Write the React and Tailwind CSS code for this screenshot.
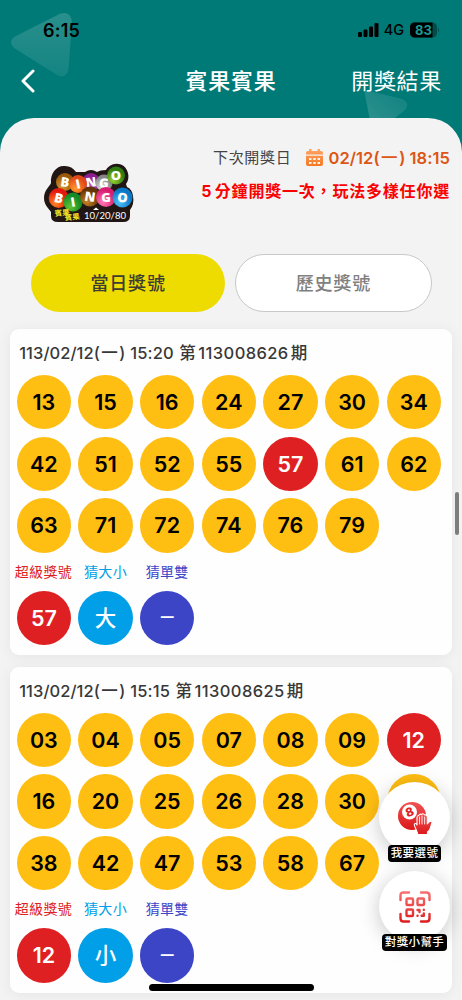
import { useState } from "react";

const draws = [
    {
        date: "113/02/12",
        time: "15:20",
        period: "113008626",
        numbers: ["13", "15", "16", "24", "27", "30", "34", "42", "51", "52", "55", "57", "61", "62", "63", "71", "72", "74", "76", "79"],
        superNumber: "57",
        size: "大",
        parity: "－",
    },
    {
        date: "113/02/12",
        time: "15:15",
        period: "113008625",
        numbers: ["03", "04", "05", "07", "08", "09", "12", "16", "20", "25", "26", "28", "30", "34", "38", "42", "47", "53", "58", "67"],
        superNumber: "12",
        size: "小",
        parity: "－",
    },
];

const logoBalls = [
    { x: 35, y: 32, r: 9, color: "#9a5a0a", light: "#d79a2c", letter: "B", tilt: 8 },
    { x: 61, y: 32, r: 9, color: "#8b1d8e", light: "#c45cc4", letter: "N", tilt: -8 },
    { x: 74, y: 33, r: 8.5, color: "#858585", light: "#dddddd", letter: "G", tilt: 8 },
    { x: 48, y: 34, r: 9, color: "#e2491a", light: "#ff9a2c", letter: "I", tilt: -12 },
    { x: 86, y: 25.5, r: 9, color: "#2f7d10", light: "#9ad232", letter: "O", tilt: 0 },
    { x: 28.7, y: 48, r: 10, color: "#e3170f", light: "#ff8a20", letter: "B", tilt: 12 },
    { x: 43, y: 52, r: 9.5, color: "#138a26", light: "#62c430", letter: "I", tilt: -10 },
    { x: 60, y: 46.5, r: 10, color: "#633307", light: "#c98522", letter: "N", tilt: 8 },
    { x: 76, y: 47, r: 10, color: "#d91c70", light: "#ff7ab8", letter: "G", tilt: 0 },
    { x: 92.5, y: 47.5, r: 10, color: "#0878c8", light: "#52c0f8", letter: "O", tilt: 8 },
];

function StatusBar() {
    return (
        <div className="flex h-[60px] items-center justify-between pl-[43px] pr-[22px] text-black">
            <span className="text-[18px] font-semibold tracking-[0.2px]">6:15</span>
            <div className="flex items-center">
                <svg className="h-[14px] w-[21px]" viewBox="0 0 21 14">
                    <rect x="0" y="9" width="4" height="5" rx="1.2" />
                    <rect x="5.5" y="6.5" width="4" height="7.5" rx="1.2" />
                    <rect x="11" y="3.5" width="4" height="10.5" rx="1.2" />
                    <rect x="16.5" y="0" width="4" height="14" rx="1.2" />
                </svg>
                <span className="ml-[5px] text-[14.5px] font-medium">4G</span>
                <svg className="ml-[6px] h-[16px] w-[30px]" viewBox="0 0 30 16">
                    <rect x="0" y="0.5" width="27" height="15" rx="4.5" fill="#004e4b" />
                    <path d="M4.5.5H22.5v15h-18A4.5 4.5 0 0 1 0 11V5A4.5 4.5 0 0 1 4.5.5Z" />
                    <path d="M28 5.5q2 2.5 0 5Z" fill="#004e4b" />
                    <text x="13.5" y="12.6" textAnchor="middle" fill="#1a9a94" fontSize="13" fontWeight="700">83</text>
                </svg>
            </div>
        </div>
    );
}

function Header() {
    return (
        <header className="relative h-[118px] shrink-0">
            <svg className="absolute left-0 top-0 h-[140px] w-full" viewBox="0 0 462 140">
                <defs>
                    <linearGradient id="triLeft" x1="0" y1="0" x2="0" y2="1">
                        <stop offset="0" stopColor="#fff" stopOpacity="0.16" />
                        <stop offset="1" stopColor="#fff" stopOpacity="0.08" />
                    </linearGradient>
                    <linearGradient id="triRight" x1="1" y1="0" x2="0" y2="1">
                        <stop offset="0" stopColor="#fff" stopOpacity="0.06" />
                        <stop offset="1" stopColor="#fff" stopOpacity="0.19" />
                    </linearGradient>
                </defs>
                <path d="M14 37 60 13.8Q70 10.500 72 21L68.500 69Q67 78.500 58 75.500L14 48Q8 42 14 37Z" fill="url(#triLeft)" />
                <path d="M369 91 402.500 99Q411 104 405 110L380 130H372L365 95Q364 90 369 91Z" fill="url(#triRight)" />
            </svg>
            <div className="relative">
                <StatusBar />
                <div className="grid h-[42px] grid-cols-[1fr_auto_1fr] items-center px-[20px] text-white">
                    <svg className="ml-[1px] h-[24px] w-[14px]" viewBox="0 0 14 24" fill="none" stroke="currentColor" strokeWidth="3" strokeLinecap="round" strokeLinejoin="round">
                        <path d="M12 2 2 12l10 10" />
                    </svg>
                    <h1 className="text-[22px] font-medium tracking-[0.7px]">賓果賓果</h1>
                    <span className="text-right text-[22px] font-normal tracking-[0.7px]">開獎結果</span>
                </div>
            </div>
        </header>
    );
}

function BingoLogo() {
    return (
        <svg className="h-[90px] w-[120px]" viewBox="0 0 120 90" fontFamily='"Open Sans", "Noto Sans CJK TC", sans-serif'>
            <defs>
                {logoBalls.map((ball, i) => (
                    <radialGradient key={i} id={`logoBall${i}`} cx="0.35" cy="0.75" r="0.6">
                        <stop offset="0" stopColor={ball.light} />
                        <stop offset="1" stopColor={ball.color} />
                    </radialGradient>
                ))}
            </defs>
            <path
                d="M35 16C27 15 20 23 21 33C20 36 14 40 14 48C14 55 19 59 21 62V66Q21 72 28 72H93Q100 72 100 66V60Q104.500 54 103 46Q102 39 97 37L96 34C101 28 98 17 91 14.500C84 12 78 16 76 20Q70 20 67 22Q61 18 55 22H46Q42 16 35 16Z"
                fill="#211613"
            />
            {logoBalls.map((ball, i) => (
                <g key={i}>
                    <circle cx={ball.x} cy={ball.y} r={ball.r} fill={`url(#logoBall${i})`} />
                    <text
                        x={ball.x} y={ball.y + 4.700} textAnchor="middle" fill="#fff" fontSize="13" fontWeight="800"
                        transform={`rotate(${ball.tilt} ${ball.x} ${ball.y})`}>
                        {ball.letter}
                    </text>
                </g>
            ))}
            <text x="25" y="66.500" fill="#f2e526" fontSize="7.5" fontWeight="700" transform="rotate(-7 24 66)">賓果</text>
            <text x="35" y="70.500" fill="#f2e526" fontSize="7.5" fontWeight="700" transform="rotate(-6 35 70)">賓果</text>
            <path d="M63 60 66 57.500 69 60Z" fill="#fff" />
            <text x="54" y="69" fill="#fff" fontFamily="Lato, sans-serif" fontSize="9.5" textLength="42" lengthAdjust="spacingAndGlyphs">10/20/80</text>
        </svg>
    );
}

function NextDraw() {
    return (
        <section className="flex h-[110px] shrink-0 justify-between pl-[30px] pr-[12px]">
            <div className="pt-[32px]">
                <BingoLogo />
            </div>
            <div className="flex flex-col items-end pt-[28px]">
                <div className="flex h-[24px] items-center">
                    <span className="text-[15px] tracking-[0.7px] text-[#444]">下次開獎日</span>
                    <svg className="ml-[14px] h-[18px] w-[19px]" viewBox="0 0 19 18">
                        <defs>
                            <linearGradient id="calendar" x1="0" y1="0" x2="0" y2="1">
                                <stop offset="0" stopColor="#ffa565" />
                                <stop offset="1" stopColor="#f47924" />
                            </linearGradient>
                        </defs>
                        <path d="M3 2h1V0h2.500v2h6V0H15v2h1q2 0 2 2v1.500H1V4q0-2 2-2ZM1 6.800h17V15q0 2-2 2H3q-2 0-2-2Z" fill="url(#calendar)" />
                        <path d="M4 9h2.500v2H4ZM8.200 9h2.500v2H8.200ZM12.500 9H15v2h-2.500ZM4 13h2.500v2H4ZM8.200 13h2.500v2H8.200ZM12.500 13H15v2h-2.500Z" fill="#fff3e9" />
                    </svg>
                    <span className="ml-[4px] text-[16.500px] font-semibold tracking-[0.05px] text-[#dc5615]">
                        02/12(<span className="mx-[1.500px] font-medium">一</span>) 18:15
                    </span>
                </div>
                <p className="mt-[9px] h-[24px] whitespace-nowrap text-[16px] font-bold leading-[24px] tracking-[0.8px] text-[#fb0000]">
                    <span className="mr-[2.500px]">5</span>分鐘開獎一次，玩法多樣任你選
                </p>
            </div>
        </section>
    );
}

function Ball({ value, className }) {
    return (
        <div className={`flex size-[54.400px] items-center justify-center rounded-full ${className}`}>
            {value}
        </div>
    );
}

function DrawCard({ draw }) {
    return (
        <article className="h-[326px] shrink-0 rounded-[9px] bg-[#fefefe] pl-[7px] shadow-[0_2px_14px_rgba(0,0,0,0.06)]">
            <h2 className="flex h-[46px] items-center whitespace-pre pl-[2.500px] pt-[3px] text-[16.500px] font-medium text-[#383838]">
                <span className="tracking-[0.05px]">{draw.date}(</span>
                <span className="mx-[1.500px]">一</span>
                <span className="tracking-[0.15px]">) {draw.time} </span>
                <span className="ml-[1px]">第</span>
                <span className="ml-[2.500px] tracking-[0.4px]">{draw.period}</span>
                <span className="ml-[2px]">期</span>
            </h2>
            <div className="grid grid-cols-[repeat(7,54.400px)] gap-x-[7.250px] gap-y-[7.200px] text-[21.500px] font-semibold">
                {draw.numbers.map((n) => (
                    <Ball key={n} value={n} className={n === draw.superNumber ? "bg-[#df2023] text-white" : "bg-[#ffbe12] text-black"} />
                ))}
            </div>
            <div className="mt-[7px] grid grid-cols-[repeat(3,54.400px)] justify-items-center gap-x-[7.250px] text-[14px] leading-[24px] tracking-[0.3px]">
                <span className="-ml-[1px] whitespace-nowrap text-[#df2023]">超級獎號</span>
                <span className="text-[#009fe8]">猜大小</span>
                <span className="text-[#3d45c7]">猜單雙</span>
            </div>
            <div className="mt-[7px] flex gap-[7.250px] text-[21.500px]">
                <Ball value={draw.superNumber} className="bg-[#df2023] font-semibold text-white" />
                <Ball value={draw.size} className="bg-[#009fe8] font-medium text-white" />
                <Ball value={draw.parity} className="bg-[#3d45c7] text-[18px] font-bold text-white" />
            </div>
        </article>
    );
}

function FloatingButton({ label, children }) {
    return (
        <button className="flex h-[80px] flex-col items-center">
            <span className="flex size-[71px] shrink-0 items-center justify-center rounded-full bg-white shadow-[0_4px_20px_rgba(0,0,0,0.22)]">
                {children}
            </span>
            <span className="relative -mt-[8.500px] h-[17px] shrink-0 whitespace-nowrap rounded-[4px] bg-black px-[3px] text-[11.500px] font-medium leading-[17px] tracking-[0.4px] text-white">
                {label}
            </span>
        </button>
    );
}

function PickIcon() {
    return (
        <svg className="h-[36px] w-[36px]" viewBox="0 0 36 36">
            <defs>
                <linearGradient id="pick" x1="0" y1="0" x2="0" y2="1">
                    <stop offset="0" stopColor="#ef5354" />
                    <stop offset="1" stopColor="#dc1719" />
                </linearGradient>
            </defs>
            <circle cx="15" cy="16" r="14" fill="url(#pick)" />
            <circle cx="12.500" cy="12" r="7.500" fill="#fff" />
            <text x="12.500" y="16.300" textAnchor="middle" fontSize="12" fontWeight="800" fill="#df2023" transform="rotate(-22 12.500 12)">8</text>
            <path
                d="M20.500 33 18 27Q16.500 24 18.300 23.500Q19.500 23.300 20 25V17.500Q20 15.500 21.800 15.500Q22.700 13.500 24.500 14.500Q26 12.800 27.700 15Q30 14.500 30.300 17V24L32 22Q34 20.500 35.200 22L33.500 27.500Q33 30 30.500 32V34.500H20.500Z"
                fill="url(#pick)" stroke="#fff" strokeWidth="1.1" strokeLinejoin="round"
            />
            <path d="M22.500 17v7M25 16v8M27.700 17v7" stroke="#fff" strokeWidth="0.9" strokeLinecap="round" />
        </svg>
    );
}

function ScanIcon() {
    return (
        <svg className="h-[34px] w-[34px]" viewBox="0 0 34 34" fill="none">
            <defs>
                <linearGradient id="scan" gradientUnits="userSpaceOnUse" x1="0" y1="1" x2="0" y2="33">
                    <stop offset="0" stopColor="#f77475" />
                    <stop offset="1" stopColor="#db191b" />
                </linearGradient>
            </defs>
            <g stroke="url(#scan)" strokeWidth="2.4" strokeLinecap="round" strokeLinejoin="round">
                <path d="M2.500 10V5.500q0-3 3-3H11M23 2.500h5.500q3 0 3 3V10M2.500 24v4.500q0 3 3 3H11M23 31.500h5.500q3 0 3-3V24" />
                <rect x="8.500" y="8.500" width="6.500" height="6.500" rx="1" />
                <rect x="19.500" y="8.500" width="6.500" height="6.500" rx="1" />
                <rect x="8.500" y="19.500" width="6.500" height="6.500" rx="1" />
                <path d="M19.500 20h2v2M25.800 19.800v.1M19.500 25.800h.1M25.800 23.500v2.300h-2.200" />
            </g>
        </svg>
    );
}

export default function App() {
    const [tab, setTab] = useState("today");
    const active = "bg-[#eedc00] text-[#3c3c32]";
    const idle = "border border-[#c8c8c8] bg-white text-[#808080]";

    return (
        <div className='relative flex h-[1000px] w-[462px] flex-col overflow-hidden bg-[#007a77] font-["Inter","Noto_Sans_CJK_TC",sans-serif]'>
            <Header />
            <main className="relative flex h-[882px] flex-col rounded-t-[34px] bg-[#f3f3f3]">
                <NextDraw />
                <div className="mt-[25.500px] flex h-[58px] shrink-0 gap-[10px] pl-[31px] pr-[30.500px]">
                    <button onClick={() => setTab("today")} className={`flex-1 rounded-full pt-[1px] text-[18px] font-medium tracking-[0.8px] ${tab === "today" ? active : idle}`}>
                        當日獎號
                    </button>
                    <button onClick={() => setTab("history")} className={`flex-1 rounded-full pt-[1px] text-[18px] font-medium tracking-[0.8px] ${tab === "history" ? active : idle}`}>
                        歷史獎號
                    </button>
                </div>
                <div className="mt-[17.500px] flex flex-col gap-[11.700px] px-[9.700px]">
                    {draws.map((draw) => (
                        <DrawCard key={draw.period} draw={draw} />
                    ))}
                </div>
            </main>
            <div className="absolute left-[379px] top-[782px] flex w-[71px] flex-col items-center gap-[9px]">
                <FloatingButton label="我要選號">
                    <PickIcon />
                </FloatingButton>
                <FloatingButton label="對獎小幫手">
                    <ScanIcon />
                </FloatingButton>
            </div>
            <div className="absolute left-[455px] top-[492px] h-[43px] w-[4px] rounded-full bg-[#7c7c7c]" />
            <div className="absolute left-[149px] top-[984px] h-[7px] w-[165px] rounded-full bg-black" />
        </div>
    );
}
